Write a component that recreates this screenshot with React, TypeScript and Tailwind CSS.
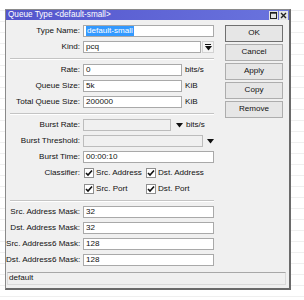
import React from "react";

// small helpers for the winbox-like dialog
function Label({ children }: { children: React.ReactNode }) {
  return <div className="w-[74px] shrink-0 text-right whitespace-nowrap">{children}</div>;
}

function Field({ children, className = "", disabled = false }: { children?: React.ReactNode; className?: string; disabled?: boolean }) {
  return (
    <div
      className={`flex h-[12px] items-center border pl-[2px] leading-none ${
        disabled ? "border-[#bcbcbc] bg-[#f0f0f0]" : "border-[#a9a9a9] bg-white"
      } ${className}`}
    >
      {children}
    </div>
  );
}

function Row({ label, children }: { label: string; children: React.ReactNode }) {
  return (
    <div className="flex h-[16px] items-center gap-[3px]">
      <Label>{label}</Label>
      {children}
    </div>
  );
}

function Separator() {
  return (
    <div className="flex h-[7px] items-center">
      <div className="ml-[4px] h-[2px] w-[204px] border-t border-b border-t-[#c4c4c4] border-b-white" />
    </div>
  );
}

function Arrow() {
  return (
    <svg width="7" height="5" viewBox="0 0 7 5">
      <path d="M0 0 L7 0 L3.5 4.5 Z" fill="#111" />
    </svg>
  );
}

function Check({ label }: { label: string }) {
  return (
    <div className="flex items-center gap-[2px]">
      <div className="flex h-[10px] w-[10px] items-center justify-center border border-[#8f8f8f] bg-white">
        <svg width="8" height="8" viewBox="0 0 8 8">
          <path d="M1 4 L3 6 L7 1.5" stroke="#111" strokeWidth="1.6" fill="none" />
        </svg>
      </div>
      <span>{label}</span>
    </div>
  );
}

function Button({ children, primary = false }: { children: React.ReactNode; primary?: boolean }) {
  return (
    <div
      className={`flex h-[17px] w-[58px] items-center justify-center border bg-[#e6e6e6] leading-none ${
        primary ? "border-[#6f6f6f]" : "border-[#adadad]"
      }`}
    >
      {children}
    </div>
  );
}

export default function App() {
  return (
    <div className="h-[300px] w-[304px] overflow-hidden bg-white bg-[repeating-linear-gradient(to_bottom,#ffffff_0px,#ffffff_10px,#efefef_10px,#efefef_11px)] pl-[5px] pt-[9px] font-['Liberation_Sans',Arial,sans-serif] text-[8.1px] text-[#111]">
      <div className="flex h-[281px] w-[286px] flex-col border-t border-l border-r-2 border-b-2 border-t-[#8a8a8a] border-l-[#8a8a8a] border-r-[#6a6a6a] border-b-[#6a6a6a] bg-[#f0f0f0]">
        {/* title bar */}
        <div className="flex h-[10px] shrink-0 items-center justify-between bg-linear-to-r from-[#5454cc] to-[#6a74de] pl-[2px] pr-[1px]">
          <span className="text-[8.2px] leading-none text-white">Queue Type &lt;default-small&gt;</span>
          <div className="flex gap-[1px]">
            <div className="flex h-[9px] w-[9px] items-center justify-center bg-[#e4e4e4]">
              <svg width="7" height="7" viewBox="0 0 7 7">
                <rect x="0.5" y="0.5" width="6" height="6" fill="none" stroke="#222" strokeWidth="1" />
                <line x1="0" y1="1.2" x2="7" y2="1.2" stroke="#222" strokeWidth="1" />
              </svg>
            </div>
            <div className="flex h-[9px] w-[9px] items-center justify-center bg-[#e4e4e4]">
              <svg width="7" height="7" viewBox="0 0 7 7">
                <path d="M1 1 L6 6 M6 1 L1 6" stroke="#222" strokeWidth="1.4" />
              </svg>
            </div>
          </div>
        </div>

        {/* body */}
        <div className="flex flex-1 flex-col pt-[3px]">
          <div className="flex">
            <div className="flex w-[208px] flex-col">
              <Row label="Type Name:">
                <Field className="w-[131px]">
                  <span className="bg-[#3399ff] px-[1px] py-[1px] text-white">default-small</span>
                </Field>
              </Row>
              <Row label="Kind:">
                <Field className="w-[118px]">pcq</Field>
                <div className="ml-[-2px] flex h-[12px] w-[12px] flex-col items-center justify-center gap-[1px] border border-[#d2d2d2] bg-[#f4f4f4]">
                  <div className="h-[1px] w-[6px] bg-[#111]" />
                  <Arrow />
                </div>
              </Row>
              <Separator />
              <Row label="Rate:">
                <Field className="w-[99px]">0</Field>
                <span>bits/s</span>
              </Row>
              <Row label="Queue Size:">
                <Field className="w-[99px]">5k</Field>
                <span>KiB</span>
              </Row>
              <Row label="Total Queue Size:">
                <Field className="w-[99px]">200000</Field>
                <span>KiB</span>
              </Row>
              <Separator />
              <Row label="Burst Rate:">
                <Field disabled className="w-[88px]" />
                <div className="flex w-[11px] justify-center">
                  <Arrow />
                </div>
                <span className="-ml-[2px]">bits/s</span>
              </Row>
              <Row label="Burst Threshold:">
                <Field disabled className="w-[120px]" />
                <div className="flex w-[8px] justify-center">
                  <Arrow />
                </div>
              </Row>
              <Row label="Burst Time:">
                <Field className="w-[131px]">00:00:10</Field>
              </Row>
              <Row label="Classifier:">
                <div className="flex pl-[1px]">
                  <div className="w-[62px]">
                    <Check label="Src. Address" />
                  </div>
                  <Check label="Dst. Address" />
                </div>
              </Row>
              <Row label="">
                <div className="flex pl-[1px]">
                  <div className="w-[62px]">
                    <Check label="Src. Port" />
                  </div>
                  <Check label="Dst. Port" />
                </div>
              </Row>
              <Separator />
              <Row label="Src. Address Mask:">
                <Field className="w-[131px]">32</Field>
              </Row>
              <Row label="Dst. Address Mask:">
                <Field className="w-[131px]">32</Field>
              </Row>
              <Row label="Src. Address6 Mask:">
                <Field className="w-[131px]">128</Field>
              </Row>
              <Row label="Dst. Address6 Mask:">
                <Field className="w-[131px]">128</Field>
              </Row>
            </div>

            <div className="ml-[11px] mt-[2px] flex flex-col gap-[2px]">
              <Button primary>OK</Button>
              <Button>Cancel</Button>
              <Button>Apply</Button>
              <Button>Copy</Button>
              <Button>Remove</Button>
            </div>
          </div>

          {/* status bar */}
          <div className="mb-[3px] ml-[1px] mr-[3px] mt-auto flex h-[13px] items-center border border-[#dadada] border-t-[#a8a8a8] pl-[1px] leading-none">
            default
          </div>
        </div>
      </div>
    </div>
  );
}
